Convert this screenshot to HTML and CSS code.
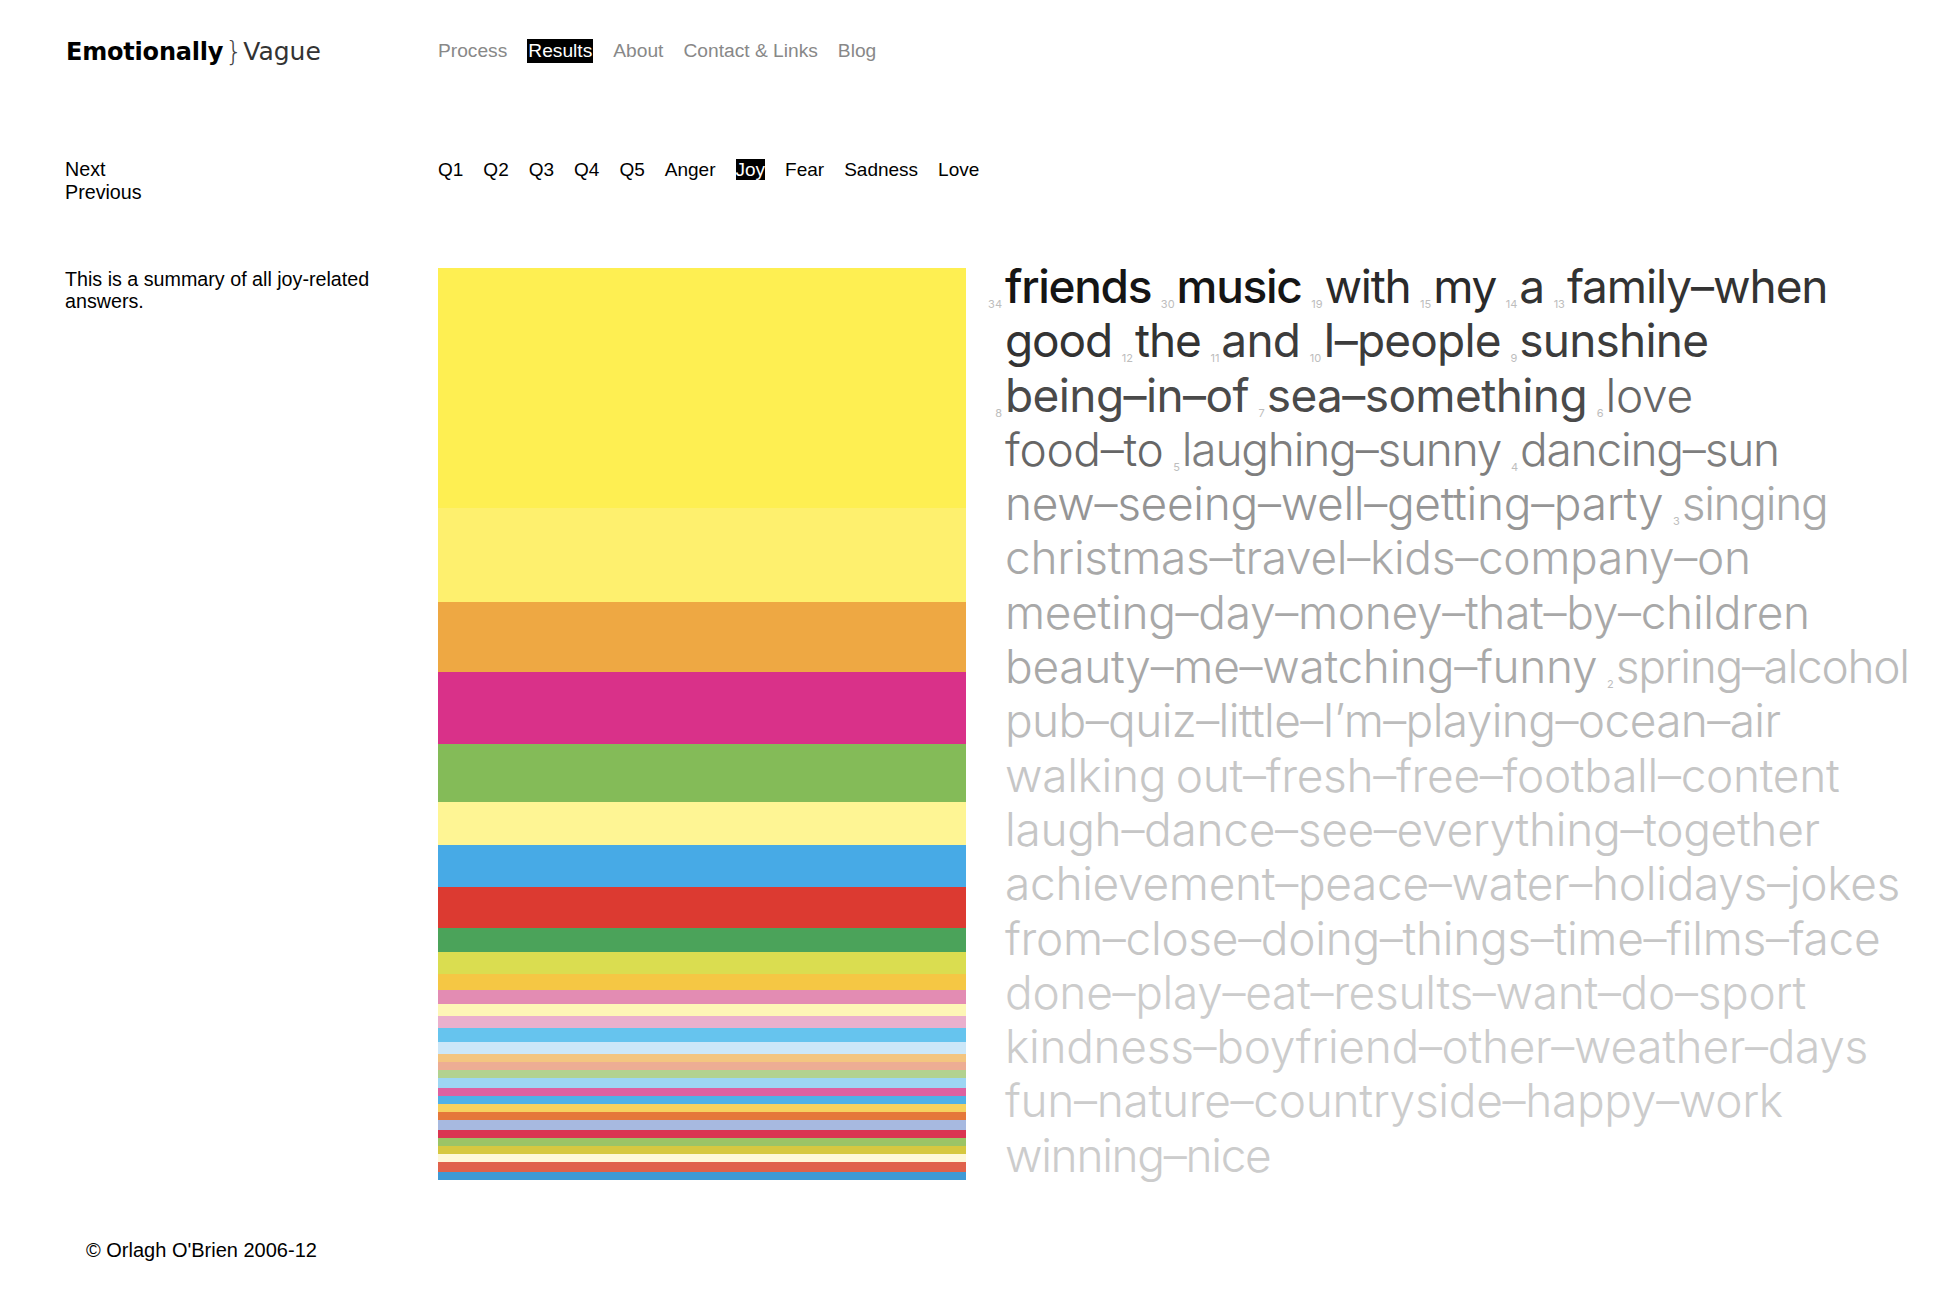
FILE: index.html
```html
<!DOCTYPE html>
<html lang="en">
<head>
<meta charset="utf-8">
<title>Emotionally Vague — Results — Joy</title>
<link rel="stylesheet" href="styles.css">
</head>
<body>
<div class="page">
  <header class="top">
    <div class="logo"><span class="emo">Emotionally</span><span class="brace">}</span><span class="vague">Vague</span></div>
    <nav class="main-nav">
      <a href="#">Process</a>
      <a href="#" class="on">Results</a>
      <a href="#">About</a>
      <a href="#">Contact &amp; Links</a>
      <a href="#">Blog</a>
    </nav>
  </header>

  <div class="sub">
    <div class="pager">
      <a href="#">Next</a>
      <a href="#">Previous</a>
    </div>
    <nav class="sub-nav">
      <a href="#">Q1</a>
      <a href="#">Q2</a>
      <a href="#">Q3</a>
      <a href="#">Q4</a>
      <a href="#">Q5</a>
      <a href="#">Anger</a>
      <a href="#" class="on">Joy</a>
      <a href="#">Fear</a>
      <a href="#">Sadness</a>
      <a href="#">Love</a>
    </nav>
  </div>

  <main class="content">
    <p class="summary">This is a summary of all joy-related answers.</p>

    <div class="chart">
      <span class="band" style="height:240px;background:#FEEF52"></span>
      <span class="band" style="height:94px;background:#FEF06E"></span>
      <span class="band" style="height:70px;background:#EEA843"></span>
      <span class="band" style="height:72px;background:#D93189"></span>
      <span class="band" style="height:58px;background:#84BB58"></span>
      <span class="band" style="height:43px;background:#FEF594"></span>
      <span class="band" style="height:42px;background:#47AAE6"></span>
      <span class="band" style="height:41px;background:#DC3A31"></span>
      <span class="band" style="height:24px;background:#4BA35A"></span>
      <span class="band" style="height:22px;background:#DADD50"></span>
      <span class="band" style="height:16px;background:#F5C744"></span>
      <span class="band" style="height:14px;background:#E38CB3"></span>
      <span class="band" style="height:12px;background:#FDF6B6"></span>
      <span class="band" style="height:12px;background:#EAB0CD"></span>
      <span class="band" style="height:14px;background:#66C4EE"></span>
      <span class="band" style="height:12px;background:#CCE7F8"></span>
      <span class="band" style="height:8px;background:#F3C580"></span>
      <span class="band" style="height:8px;background:#EDAD94"></span>
      <span class="band" style="height:8px;background:#B2D28F"></span>
      <span class="band" style="height:10px;background:#9DD6F3"></span>
      <span class="band" style="height:8px;background:#DE61A0"></span>
      <span class="band" style="height:8px;background:#4FB1E7"></span>
      <span class="band" style="height:8px;background:#F6D25F"></span>
      <span class="band" style="height:8px;background:#E5783A"></span>
      <span class="band" style="height:10px;background:#A7B9E0"></span>
      <span class="band" style="height:8px;background:#DA3452"></span>
      <span class="band" style="height:8px;background:#9BC466"></span>
      <span class="band" style="height:8px;background:#D6C840"></span>
      <span class="band" style="height:8px;background:#FEF8D8"></span>
      <span class="band" style="height:10px;background:#E0624B"></span>
      <span class="band" style="height:8px;background:#3F9AD6"></span>
    </div>

    <div class="cloud">
      <div class="line"><span class="n hang">34</span><span class="w t0">friends</span> <span class="n">30</span><span class="w t0">music</span> <span class="n">19</span><span class="w t1">with</span> <span class="n">15</span><span class="w t1">my</span> <span class="n">14</span><span class="w t2">a</span> <span class="n">13</span><span class="w t2">family–when</span></div>
      <div class="line"><span class="w t2">good</span> <span class="n">12</span><span class="w t2">the</span> <span class="n">11</span><span class="w t3">and</span> <span class="n">10</span><span class="w t3">I–people</span> <span class="n">9</span><span class="w t3">sunshine</span></div>
      <div class="line"><span class="n hang">8</span><span class="w t4">being–in–of</span> <span class="n">7</span><span class="w t4">sea–something</span> <span class="n">6</span><span class="w t5">love</span></div>
      <div class="line"><span class="w t5">food–to</span> <span class="n">5</span><span class="w t6">laughing–sunny</span> <span class="n">4</span><span class="w t6">dancing–sun</span></div>
      <div class="line"><span class="w t7">new–seeing–well–getting–party</span> <span class="n">3</span><span class="w t8 tight">singing</span></div>
      <div class="line"><span class="w t8">christmas–travel–kids–company–on</span></div>
      <div class="line"><span class="w t8">meeting–day–money–that–by–children</span></div>
      <div class="line"><span class="w t8">beauty–me–watching–funny</span> <span class="n">2</span><span class="w t9 tight">spring–alcohol</span></div>
      <div class="line"><span class="w t9">pub–quiz–little–I’m–playing–ocean–air</span></div>
      <div class="line"><span class="w t10">walking out–fresh–free–football–content</span></div>
      <div class="line"><span class="w t10">laugh–dance–see–everything–together</span></div>
      <div class="line"><span class="w t10">achievement–peace–water–holidays–jokes</span></div>
      <div class="line"><span class="w t10">from–close–doing–things–time–films–face</span></div>
      <div class="line"><span class="w t11">done–play–eat–results–want–do–sport</span></div>
      <div class="line"><span class="w t11">kindness–boyfriend–other–weather–days</span></div>
      <div class="line"><span class="w t11">fun–nature–countryside–happy–work</span></div>
      <div class="line"><span class="w t11 tight">winning–nice</span></div>
    </div>
  </main>

  <footer class="foot">© Orlagh O'Brien 2006-12</footer>
</div>
</body>
</html>
```

FILE: styles.css
```css
html, body {
  margin: 0;
  padding: 0;
  background: #fff;
}

body {
  font-family: "Liberation Sans", Arial, sans-serif;
  font-size: 19.7px;
  color: #000;
}

a {
  color: inherit;
  text-decoration: none;
}

.page {
  padding-left: 65px;
  width: 1869px;
}

/* ---------- header ---------- */
.top {
  display: flex;
  align-items: center;
  padding-top: 39px;
  height: 24px;
}

.logo {
  width: 372px;
  padding-left: 1px;
  font-family: "DejaVu Sans", sans-serif;
  font-size: 24px;
  line-height: 24px;
  white-space: nowrap;
  letter-spacing: -0.2px;
}

.emo {
  font-weight: bold;
  color: #000;
}

.brace {
  font-weight: 200;
  color: #444;
  font-size: 27px;
  margin: 0 1px 0 2px;
}

.vague {
  color: #333;
  font-size: 25px;
  letter-spacing: 0;
}

.main-nav {
  display: flex;
  gap: 20px;
  color: #888;
  line-height: 24px;
  font-size: 19.2px;
}

.main-nav .on {
  background: #000;
  color: #fff;
  padding: 0 1px;
}

/* ---------- sub navigation ---------- */
.sub {
  display: flex;
  margin-top: 95px;
}

.pager {
  width: 373px;
  display: flex;
  flex-direction: column;
  line-height: 23px;
}

.sub-nav {
  display: flex;
  align-items: flex-start;
  gap: 20px;
  line-height: 23px;
  font-size: 19px;
}

.sub-nav .on {
  background: #000;
  color: #fff;
  padding: 0;
  line-height: 21px;
  margin-top: 1px;
}

/* ---------- content ---------- */
.content {
  display: flex;
  align-items: flex-start;
  margin-top: 64px;
}

.summary {
  width: 340px;
  margin: 0 33px 0 0;
  line-height: 22px;
}

.chart {
  width: 528px;
  flex-shrink: 0;
  display: flex;
  flex-direction: column;
}

.band {
  display: block;
}

.cloud {
  margin-left: 39px;
  margin-top: -9px;
  font-family: Inter, "Noto Sans", sans-serif;
  font-size: 46px;
  line-height: 54.3px;
  font-weight: 300;
  white-space: nowrap;
  letter-spacing: -0.3px;
  word-spacing: -3px;
}

.line {
  height: 54.3px;
}

.n {
  font-size: 11px;
  font-weight: 400;
  color: #bdbdbd;
  letter-spacing: 0;
  word-spacing: 0;
  margin-right: 2px;
  vertical-align: -5px;
}

.n.hang {
  display: inline-block;
  width: 14px;
  margin-left: -17px;
  margin-right: 3px;
  text-align: right;
  line-height: 11px;
}

.t0  { color: #151515; font-weight: 500; letter-spacing: -1.3px; }
.t1  { color: #2a2a2a; font-weight: 400; letter-spacing: -1.3px; }
.t2  { color: #333; font-weight: 400; letter-spacing: -1.1px; }
.t3  { color: #3c3c3c; font-weight: 400; letter-spacing: -0.8px; }
.t4  { color: #4a4a4a; font-weight: 400; letter-spacing: -0.6px; }
.t5  { color: #666; }
.t6  { color: #7e7e7e; letter-spacing: -1.2px; }
.t7  { color: #959595; }
.t8  { color: #a8a8a8; }
.t9  { color: #bcbcbc; letter-spacing: -0.6px; }
.t10 { color: #c6c6c6; }
.t11 { color: #cccccc; }

.w.tight { letter-spacing: -1.3px; }

/* ---------- footer ---------- */
.foot {
  margin-top: 57px;
  padding-left: 21px;
  font-size: 20px;
  line-height: 22px;
}
```
